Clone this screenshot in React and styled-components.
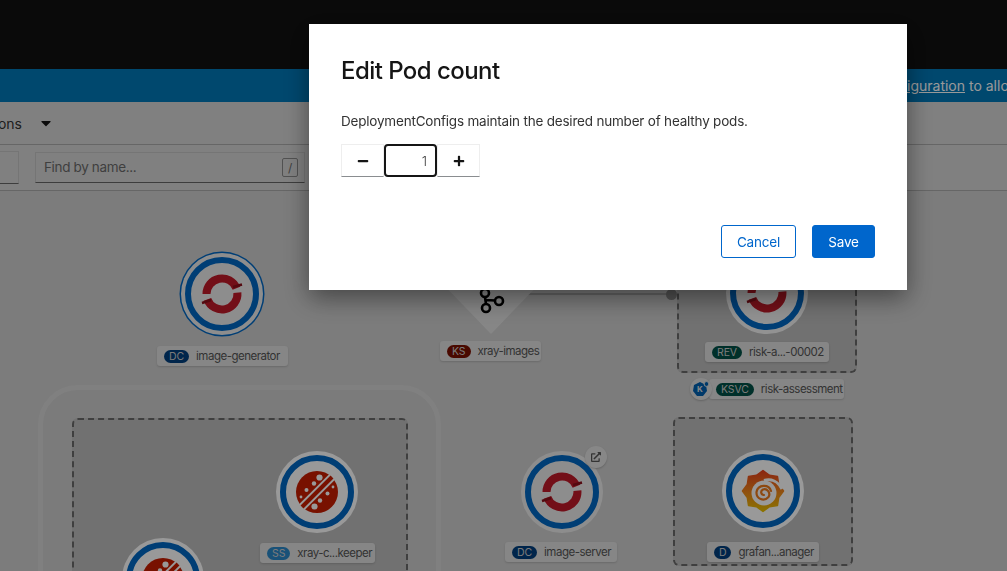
import React from 'react';
import styled, { createGlobalStyle } from 'styled-components';
import { FaMinus, FaPlus, FaExternalLinkAlt, FaCaretDown } from 'react-icons/fa';

const GlobalStyle = createGlobalStyle`
  html, body {
    margin: 0;
    height: 100%;
    overflow: hidden;
    font-family: Inter, "Noto Sans", sans-serif;
    color: #151515;
  }
`;

const Page = styled.div`
  width: 1007px;
  height: 571px;
  display: flex;
  flex-direction: column;
  overflow: hidden;
  background: #fff;
`;

const TopBar = styled.div`
  height: 69px;
  flex: none;
  background: #111;
`;

const Banner = styled.div`
  height: 33px;
  flex: none;
  background: #0078b8;
  display: flex;
  align-items: center;
  justify-content: flex-end;
  overflow: hidden;
  color: #fff;
  font-size: 14px;
  white-space: nowrap;
`;

const BannerText = styled.span`
  margin-right: -13px;
  a {
    color: inherit;
    text-decoration: underline;
  }
`;

const Toolbar = styled.div`
  height: 42px;
  flex: none;
  display: flex;
  align-items: center;
  gap: 16px;
  background: #d6d6d6;
  border-bottom: 1px solid #aaa;
  font-size: 14px;
`;

const ClippedMenu = styled.div`
  width: 22px;
  display: flex;
  justify-content: flex-end;
  overflow: hidden;
  white-space: nowrap;
  color: #333;
`;

const FilterRow = styled.div`
  height: 45px;
  flex: none;
  display: flex;
  align-items: center;
  gap: 16px;
  background: #d6d6d6;
  border-bottom: 1px solid #aaa;
  font-size: 13.5px;
  letter-spacing: -0.35px;
`;

const ClippedInput = styled.div`
  width: 18px;
  height: 31px;
  border: 1px solid #c4c4c4;
  border-left: 0;
  border-bottom-color: #666;
`;

const SearchInput = styled.div`
  width: 270px;
  height: 31px;
  padding: 0 6px 1px 8px;
  box-sizing: border-box;
  display: flex;
  align-items: center;
  justify-content: space-between;
  border: 1px solid #c4c4c4;
  border-bottom-color: #666;
  color: #6a6a6a;
`;

const Kbd = styled.span`
  width: 16px;
  height: 19px;
  box-sizing: border-box;
  border: 1px solid #888;
  border-radius: 2px;
  display: flex;
  align-items: center;
  justify-content: center;
  font-size: 12px;
`;

const Canvas = styled.div`
  position: relative;
  flex: 1;
  background: #cfcfcf;
  overflow: hidden;
`;

const AppGroup = styled.div`
  position: absolute;
  left: 38px;
  top: 194px;
  width: 403px;
  height: 300px;
  box-sizing: border-box;
  border: 5px solid #d6d6d6;
  border-radius: 40px;
  background: #cdcdcd;
`;

const DashedGroup = styled.div`
  position: absolute;
  left: ${p => p.$x}px;
  top: ${p => p.$y}px;
  width: ${p => p.$w}px;
  height: ${p => p.$h}px;
  box-sizing: border-box;
  border: 2px dashed #6a6a6a;
  border-radius: 6px;
  background: #bcbcbc;
`;

const NodeCircle = styled.div`
  position: absolute;
  left: ${p => p.$x - 41}px;
  top: ${p => p.$y - 41}px;
  width: 82px;
  height: 82px;
  box-sizing: border-box;
  display: flex;
  align-items: center;
  justify-content: center;
  border-radius: 50%;
  background: ${p => p.$fill};
  &::before {
    content: '';
    position: absolute;
    inset: 4px;
    border: 6px solid #0068c4;
    border-radius: 50%;
  }
  ${p => p.$selected && `
    box-shadow: 0 0 0 1.5px #0068c4;
  `}
`;

const Label = styled.div`
  position: absolute;
  left: ${p => p.$x}px;
  top: ${p => p.$y}px;
  width: ${p => p.$w}px;
  height: 20px;
  box-sizing: border-box;
  padding: 0 7px;
  display: flex;
  align-items: center;
  gap: 7px;
  border-radius: 3px;
  background: #e0e0e0;
  box-shadow: 0 1px 2px rgba(0, 0, 0, 0.15);
  color: #555;
  font-size: 11.5px;
  letter-spacing: -0.5px;
  white-space: nowrap;
`;

const Badge = styled.span`
  height: 13px;
  padding: 0 5px;
  flex: none;
  display: flex;
  align-items: center;
  border-radius: 7px;
  background: ${p => p.$color};
  color: #ccc;
  font-size: 10.5px;
  letter-spacing: -0.1px;
`;

const Decorator = styled.div`
  position: absolute;
  left: ${p => p.$x - 11}px;
  top: ${p => p.$y - 11}px;
  width: 22px;
  height: 22px;
  display: flex;
  align-items: center;
  justify-content: center;
  border-radius: 50%;
  background: #e2e2e2;
  box-shadow: 0 1px 2px rgba(0, 0, 0, 0.2);
  color: #555;
`;

const Connector = styled.div`
  position: absolute;
  left: 520px;
  top: 102px;
  width: 150px;
  height: 2px;
  background: #aaa;
`;

const ConnectorDot = styled.div`
  position: absolute;
  left: 666px;
  top: 98px;
  width: 11px;
  height: 11px;
  border-radius: 50%;
  background: #888;
`;

const Backdrop = styled.div`
  position: fixed;
  inset: 0;
  display: flex;
  align-items: flex-start;
  padding: 24px 0 0 309px;
  background: rgba(0, 0, 0, 0.4);
`;

const Modal = styled.div`
  width: 598px;
  height: 266px;
  box-sizing: border-box;
  padding: 32px;
  display: flex;
  flex-direction: column;
  background: #fff;
  box-shadow: 0 8px 24px rgba(0, 0, 0, 0.45);
`;

const Title = styled.h1`
  margin: 0;
  font-size: 24px;
  line-height: 30px;
  font-weight: 500;
  letter-spacing: -0.55px;
  color: #151515;
`;

const Description = styled.p`
  margin: 26px 0 0;
  font-size: 13.5px;
  line-height: 18px;
  letter-spacing: -0.2px;
  color: #333;
`;

const Stepper = styled.div`
  margin-top: 14px;
  display: flex;
  height: 33px;
`;

const StepButton = styled.button`
  width: 43px;
  height: 33px;
  padding: 0;
  display: flex;
  align-items: center;
  justify-content: center;
  background: #fff;
  border: 1px solid #eee;
  border-bottom-color: #8a8d90;
  color: #151515;
`;

const StepValue = styled.div`
  width: 53px;
  height: 33px;
  box-sizing: border-box;
  padding-right: 8px;
  display: flex;
  align-items: center;
  justify-content: flex-end;
  border: 2px solid #151515;
  border-radius: 4px;
  font-size: 13.5px;
  font-weight: 300;
  color: #444;
`;

const Footer = styled.div`
  margin-top: auto;
  display: flex;
  justify-content: flex-end;
  gap: 16px;
`;

const ModalButton = styled.button`
  height: 33px;
  padding: 0;
  width: ${p => (p.$primary ? 63 : 75)}px;
  border-radius: 3px;
  border: 1px solid #06c;
  background: ${p => (p.$primary ? '#06c' : '#fff')};
  color: ${p => (p.$primary ? '#fff' : '#06c')};
  font-family: inherit;
  font-size: 13.5px;
  letter-spacing: -0.2px;
`;

function OpenShiftIcon() {
  return (
    <svg width="44" height="44" viewBox="0 0 44 44">
      <g fill="none" strokeWidth="8">
        <path d="M6.5 22 A15.5 15.5 0 0 1 36.4 16.2" stroke="#c01a28" />
        <path d="M37.4 20.6 A15.5 15.5 0 0 1 7.4 27.3" stroke="#c01a28" />
        <path d="M33 15 L42 12.5 M2 31 L11 28" stroke="#8c0f1a" strokeWidth="2.5" />
      </g>
    </svg>
  );
}

function KafkaIcon() {
  return (
    <svg width="30" height="30" viewBox="0 0 30 30">
      <g fill="none" stroke="#000" strokeWidth="2.6">
        <path d="M9 13 L10 20 M10 16 L19.5 16.5" />
        <circle cx="9" cy="9" r="4" />
        <circle cx="23" cy="17" r="4" />
        <circle cx="10" cy="24" r="4" />
      </g>
    </svg>
  );
}

function StatefulIcon() {
  return (
    <svg width="44" height="44" viewBox="0 0 44 44">
      <circle cx="22" cy="22" r="21" fill="#c81d00" />
      <path d="M2 42 L42 2" stroke="#fff" strokeWidth="8" />
      <path d="M7 37 L37 7" stroke="#c81d00" strokeWidth="4" />
      <g fill="#fff">
        <circle cx="24.5" cy="7.5" r="3.1" />
        <circle cx="19" cy="13.5" r="2.2" />
        <circle cx="11.5" cy="20" r="2" />
        <circle cx="19.5" cy="36.5" r="3.1" />
        <circle cx="25" cy="30.5" r="2.2" />
        <circle cx="32.5" cy="23.5" r="2" />
        <circle cx="38" cy="17" r="1.4" />
        <circle cx="6" cy="27" r="1.4" />
      </g>
    </svg>
  );
}

const gearPoints = Array.from({ length: 16 }, (_, i) => {
  const angle = ((i * 22.5 - 90) * Math.PI) / 180;
  const r = i % 2 ? 17 : 20.5;
  return `${(22 + r * Math.cos(angle)).toFixed(1)},${(22 + r * Math.sin(angle)).toFixed(1)}`;
}).join(' ');

function GrafanaIcon() {
  return (
    <svg width="44" height="44" viewBox="0 0 44 44">
      <defs>
        <linearGradient id="grafana" x1="0" y1="0" x2="0" y2="1">
          <stop offset="0" stopColor="#e8401c" />
          <stop offset="0.55" stopColor="#f08a1a" />
          <stop offset="1" stopColor="#e8c000" />
        </linearGradient>
      </defs>
      <polygon points={gearPoints} fill="url(#grafana)" stroke="url(#grafana)" strokeWidth="1.5" strokeLinejoin="round" />
      <circle cx="23" cy="24" r="12.5" fill="#fff" />
      <path d="M23 11.5 C30 9.5 37 12 41 20" fill="none" stroke="#fff" strokeWidth="3" />
      <path
        d="M30 22 C28 15 17 15 15.5 23 C15 30 23 33 27.5 28 C30 24 26 19 22 20.5 C19 22 20 26 23 26"
        fill="none"
        stroke="#ec7a1c"
        strokeWidth="2.2"
        strokeLinecap="round"
      />
    </svg>
  );
}

const TriangleSvg = styled.svg`
  position: absolute;
  left: 411px;
  top: 60px;
`;

const KafkaSlot = styled.div`
  position: absolute;
  left: 476px;
  top: 93px;
`;

const KnativeHex = styled.svg`
  display: block;
`;

const nodes = [
  { x: 222, y: 103, icon: <OpenShiftIcon />, fill: '#ececec', selected: true },
  { x: 767, y: 102, icon: <OpenShiftIcon />, fill: '#f4f4f4' },
  { x: 317, y: 301, icon: <StatefulIcon />, fill: '#fff' },
  { x: 163, y: 388, icon: <StatefulIcon />, fill: '#fff' },
  { x: 562, y: 301, icon: <OpenShiftIcon />, fill: '#ececec' },
  { x: 763, y: 300, icon: <GrafanaIcon />, fill: '#fff' },
];

const labels = [
  { x: 157, y: 155, w: 131, kind: 'DC', color: '#003f7d', text: 'image-generator' },
  { x: 440, y: 150, w: 101, kind: 'KS', color: '#7a1000', text: 'xray-images' },
  { x: 705, y: 151, w: 124, kind: 'REV', color: '#005046', text: 'risk-a...-00002' },
  { x: 709, y: 188, w: 135, kind: 'KSVC', color: '#005046', text: 'risk-assessment' },
  { x: 260, y: 352, w: 115, kind: 'SS', color: '#2a88c8', text: 'xray-c...keeper' },
  { x: 505, y: 351, w: 112, kind: 'DC', color: '#003f7d', text: 'image-server' },
  { x: 707, y: 351, w: 112, kind: 'D', color: '#003f7d', text: 'grafan...anager' },
];

export default function App() {
  return (
    <>
      <GlobalStyle />
      <Page>
        <TopBar />
        <Banner>
          <BannerText>
            Update your cluster <a href="#config">configuration</a> to allow
          </BannerText>
        </Banner>
        <Toolbar>
          <ClippedMenu>Display options</ClippedMenu>
          <FaCaretDown size={16} color="#151515" />
        </Toolbar>
        <FilterRow>
          <ClippedInput />
          <SearchInput>
            Find by name...
            <Kbd>/</Kbd>
          </SearchInput>
        </FilterRow>
        <Canvas>
          <AppGroup />
          <DashedGroup $x={677} $y={50} $w={180} $h={132} />
          <DashedGroup $x={72} $y={227} $w={336} $h={240} />
          <DashedGroup $x={673} $y={226} $w={180} $h={149} />
          <Connector />
          <ConnectorDot />
          <TriangleSvg width="160" height="83" viewBox="0 0 160 83">
            <path d="M0 0 H160 L80 83 Z" fill="#e0e0e0" />
          </TriangleSvg>
          <KafkaSlot>
            <KafkaIcon />
          </KafkaSlot>
          {nodes.map(n => (
            <NodeCircle key={`${n.x}-${n.y}`} $x={n.x} $y={n.y} $fill={n.fill} $selected={n.selected}>
              {n.icon}
            </NodeCircle>
          ))}
          {labels.map(l => (
            <Label key={l.text} $x={l.x} $y={l.y} $w={l.w}>
              <Badge $color={l.color}>{l.kind}</Badge>
              {l.text}
            </Label>
          ))}
          <Decorator $x={596} $y={266}>
            <FaExternalLinkAlt size={10} />
          </Decorator>
          <Decorator $x={701} $y={198}>
            <KnativeHex width="18" height="18" viewBox="0 0 18 18">
              <path d="M8 2 L14 5 L15 11 L11 16 L5 16 L1 11 L2 5 Z" fill="#005fb0" />
              <circle cx="14.5" cy="4" r="2.4" fill="#005fb0" stroke="#e2e2e2" />
              <text x="8" y="12" fontSize="8" fontWeight="700" textAnchor="middle" fill="#e2e2e2">K</text>
            </KnativeHex>
          </Decorator>
        </Canvas>
      </Page>
      <Backdrop>
        <Modal>
          <Title>Edit Pod count</Title>
          <Description>DeploymentConfigs maintain the desired number of healthy pods.</Description>
          <Stepper>
            <StepButton><FaMinus size={12} /></StepButton>
            <StepValue>1</StepValue>
            <StepButton><FaPlus size={12} /></StepButton>
          </Stepper>
          <Footer>
            <ModalButton>Cancel</ModalButton>
            <ModalButton $primary>Save</ModalButton>
          </Footer>
        </Modal>
      </Backdrop>
    </>
  );
}
